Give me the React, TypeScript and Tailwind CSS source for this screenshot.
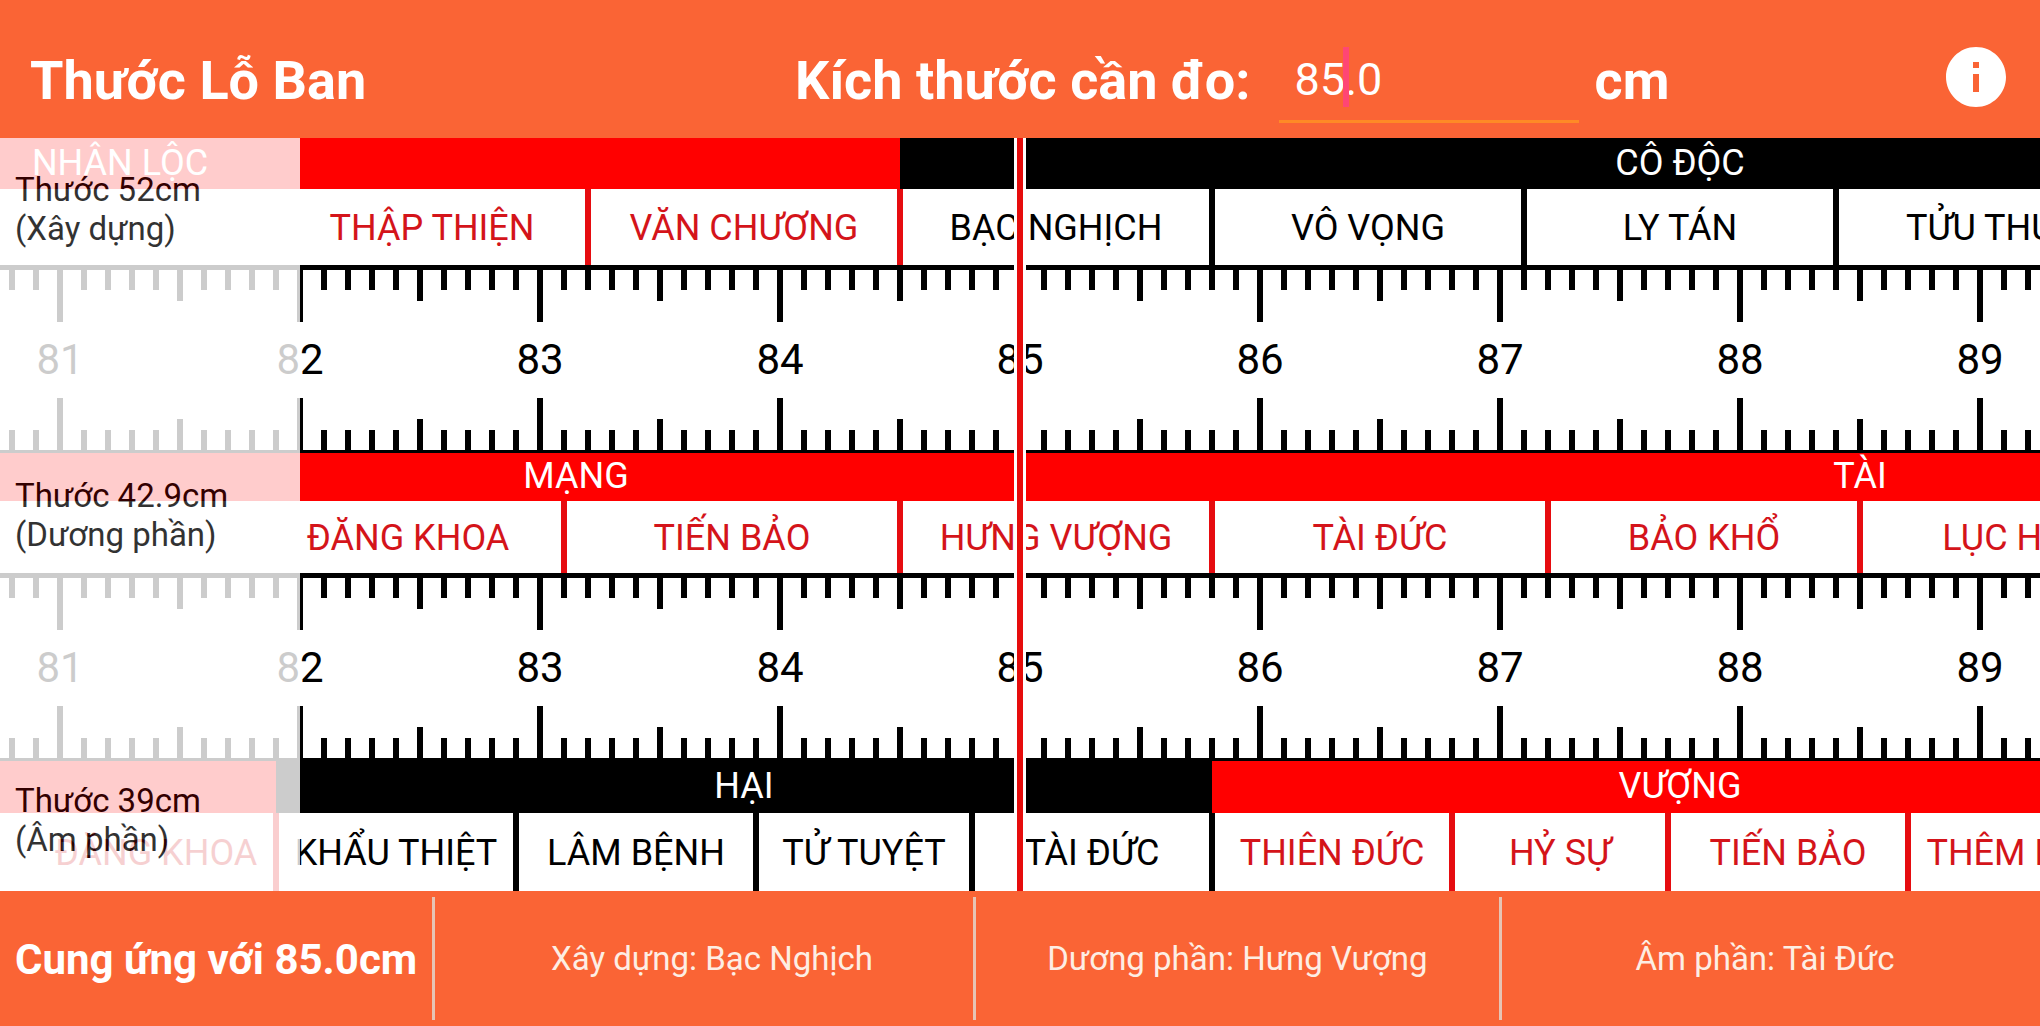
import { useState } from 'react';
import { MdInfo } from 'react-icons/md';

// 1 mm on the ruler = 24px on screen, every strip is centred on `CENTER`
const MM = 24;
const CENTER = 85;
const SPAN = 7;

type Tone = 'good' | 'bad' | 'blank';
type Segment = { label: string; mm: number; tone: Tone };
type Scale = { name: string; kind: string; groups: Segment[]; cells: Segment[] };

const scales: Scale[] = [
  {
    name: 'Thước 52cm',
    kind: '(Xây dựng)',
    groups: [
      { label: 'NHÂN LỘC', mm: 65, tone: 'good' },
      { label: 'CÔ ĐỘC', mm: 65, tone: 'bad' },
      { label: '', mm: 10, tone: 'good' },
    ],
    cells: [
      { label: '', mm: 39, tone: 'blank' },
      { label: 'THẬP THIỆN', mm: 13, tone: 'good' },
      { label: 'VĂN CHƯƠNG', mm: 13, tone: 'good' },
      { label: 'BẠC NGHỊCH', mm: 13, tone: 'bad' },
      { label: 'VÔ VỌNG', mm: 13, tone: 'bad' },
      { label: 'LY TÁN', mm: 13, tone: 'bad' },
      { label: 'TỬU THỤC', mm: 13, tone: 'bad' },
      { label: '', mm: 23, tone: 'blank' },
    ],
  },
  {
    name: 'Thước 42.9cm',
    kind: '(Dương phần)',
    groups: [
      { label: '', mm: 25, tone: 'good' },
      { label: 'MẠNG', mm: 53, tone: 'good' },
      { label: 'TÀI', mm: 54, tone: 'good' },
      { label: '', mm: 8, tone: 'bad' },
    ],
    cells: [
      { label: '', mm: 38, tone: 'blank' },
      { label: 'ĐĂNG KHOA', mm: 13, tone: 'good' },
      { label: 'TIẾN BẢO', mm: 14, tone: 'good' },
      { label: 'HƯNG VƯỢNG', mm: 13, tone: 'good' },
      { label: 'TÀI ĐỨC', mm: 14, tone: 'good' },
      { label: 'BẢO KHỔ', mm: 13, tone: 'good' },
      { label: 'LỤC HỢP', mm: 13, tone: 'good' },
      { label: '', mm: 22, tone: 'blank' },
    ],
  },
  {
    name: 'Thước 39cm',
    kind: '(Âm phần)',
    groups: [
      { label: '', mm: 39, tone: 'good' },
      { label: 'HẠI', mm: 39, tone: 'bad' },
      { label: 'VƯỢNG', mm: 39, tone: 'good' },
      { label: '', mm: 23, tone: 'bad' },
    ],
    cells: [
      { label: '', mm: 29, tone: 'blank' },
      { label: 'ĐĂNG KHOA', mm: 10, tone: 'good' },
      { label: 'KHẨU THIỆT', mm: 10, tone: 'bad' },
      { label: 'LÂM BỆNH', mm: 10, tone: 'bad' },
      { label: 'TỬ TUYỆT', mm: 9, tone: 'bad' },
      { label: 'TÀI ĐỨC', mm: 10, tone: 'bad' },
      { label: 'THIÊN ĐỨC', mm: 10, tone: 'good' },
      { label: 'HỶ SỰ', mm: 9, tone: 'good' },
      { label: 'TIẾN BẢO', mm: 10, tone: 'good' },
      { label: 'THÊM PHÚC', mm: 10, tone: 'good' },
      { label: '', mm: 23, tone: 'blank' },
    ],
  },
];

const groupTone = { good: 'bg-[#ff0000]', bad: 'bg-black', blank: 'bg-white' };
const cellTone = {
  good: 'border-[#e60c10] text-[#d4141a]',
  bad: 'border-black text-black',
  blank: 'border-transparent',
};

const ticks = Array.from({ length: SPAN * 20 + 1 }, (_, i) => i);
const numbers = Array.from({ length: SPAN * 2 + 1 }, (_, i) => CENTER - SPAN + i);

const tickHeight = (i: number) => {
  if (i % 10 === 0) return 'h-[52px]';
  if (i % 5 === 0) return 'h-[31px]';
  return 'h-5';
};

const Ticks = ({ align }: { align: string }) => (
  <div className={`flex h-[52px] justify-center ${align}`}>
    {ticks.map((i) => (
      <div key={i} className="flex w-6 shrink-0 justify-center">
        <div className={`w-1.5 bg-black ${tickHeight(i)}`} />
      </div>
    ))}
  </div>
);

const Ruler = () => (
  <div className="overflow-hidden border-t-[5px] border-b-[3px] border-black bg-white">
    <Ticks align="items-start" />
    <div className="flex h-19 items-center justify-center text-[42px] leading-none">
      {numbers.map((n) => (
        <span key={n} className="w-60 shrink-0 text-center">
          {n}
        </span>
      ))}
    </div>
    <Ticks align="items-end" />
  </div>
);

type BandProps = { scale: Scale; groupHeight: string; cellHeight: string };

const Band = ({ scale, groupHeight, cellHeight }: BandProps) => (
  <div className="flex flex-col overflow-hidden text-4xl">
    <div className={`flex justify-center ${groupHeight}`}>
      {scale.groups.map((g, i) => (
        <div
          key={i}
          style={{ width: g.mm * MM }}
          className={`flex shrink-0 items-center justify-center pb-0.5 text-white ${groupTone[g.tone]}`}
        >
          {g.label}
        </div>
      ))}
    </div>
    {/* left padding keeps each divider centred on its tick */}
    <div className={`flex justify-center bg-white pl-1.5 ${cellHeight}`}>
      {scale.cells.map((c, i) => (
        <div
          key={i}
          style={{ width: c.mm * MM }}
          className={`flex shrink-0 items-center justify-center border-r-[6px] pt-0.5 whitespace-nowrap ${cellTone[c.tone]}`}
        >
          {c.label}
        </div>
      ))}
    </div>
  </div>
);

const App = () => {
  const [size, setSize] = useState('85.0');

  return (
    <div className="flex min-h-screen flex-col bg-[#fa6435] font-[Roboto,sans-serif] text-black">
      {/* Header */}
      <header className="flex h-[138px] items-center pt-4 pr-7 pl-[30px] text-white">
        <h1 className="w-[38.6%] pt-2 text-[54px] leading-none font-bold">Thước Lỗ Ban</h1>
        <label htmlFor="size" className="pt-2 text-[54px] leading-none font-bold">
          Kích thước cần đo:
        </label>
        <div className="relative ml-7 w-[300px]">
          <input
            id="size"
            value={size}
            inputMode="decimal"
            onChange={(e) => setSize(e.target.value)}
            className="h-[92px] w-full border-b-[3px] border-[#ff8a26] bg-transparent px-4 pt-2 text-[45px] outline-none"
          />
          <span className="absolute top-4 left-16 h-15 w-1.5 bg-[#ff4674]" />
        </div>
        <span className="ml-4 pt-2 text-[54px] leading-none font-bold">cm</span>
        <button type="button" aria-label="Thông tin" className="ml-auto">
          <MdInfo size={72} />
        </button>
      </header>

      {/* Rulers */}
      <main className="relative flex flex-col">
        <Band scale={scales[0]} groupHeight="h-[51px]" cellHeight="h-[76px]" />
        <Ruler />
        <Band scale={scales[1]} groupHeight="h-12" cellHeight="h-[72px]" />
        <Ruler />
        <Band scale={scales[2]} groupHeight="h-[52px]" cellHeight="h-[78px]" />

        <div className="absolute inset-y-0 left-1/2 w-3 -translate-x-1/2 border-x-[3px] border-white bg-[#e60c0c]" />

        <aside className="absolute inset-y-0 left-0 flex w-[300px] flex-col justify-between bg-white py-8 pl-[15px] text-[33px] leading-[39px] opacity-80">
          {scales.map((s) => (
            <p key={s.name}>
              {s.name}
              <br />
              {s.kind}
            </p>
          ))}
        </aside>
      </main>

      {/* Result */}
      <footer className="flex grow py-1.5 text-[33px] text-[#fdeee4]">
        <div className="flex items-center border-r-[3px] border-[#e6c4b4] px-[15px] pt-0.5 text-[42px] font-bold text-white">
          Cung ứng với {size}cm
        </div>
        <div className="flex w-[26.5%] items-center justify-center border-r-[3px] border-[#e6c4b4] pl-4">
          Xây dựng: Bạc Nghịch
        </div>
        <div className="flex w-[25.8%] items-center justify-center border-r-[3px] border-[#e6c4b4]">
          Dương phần: Hưng Vượng
        </div>
        <div className="flex grow items-center justify-center pr-3">Âm phần: Tài Đức</div>
      </footer>
    </div>
  );
};

export default App;
